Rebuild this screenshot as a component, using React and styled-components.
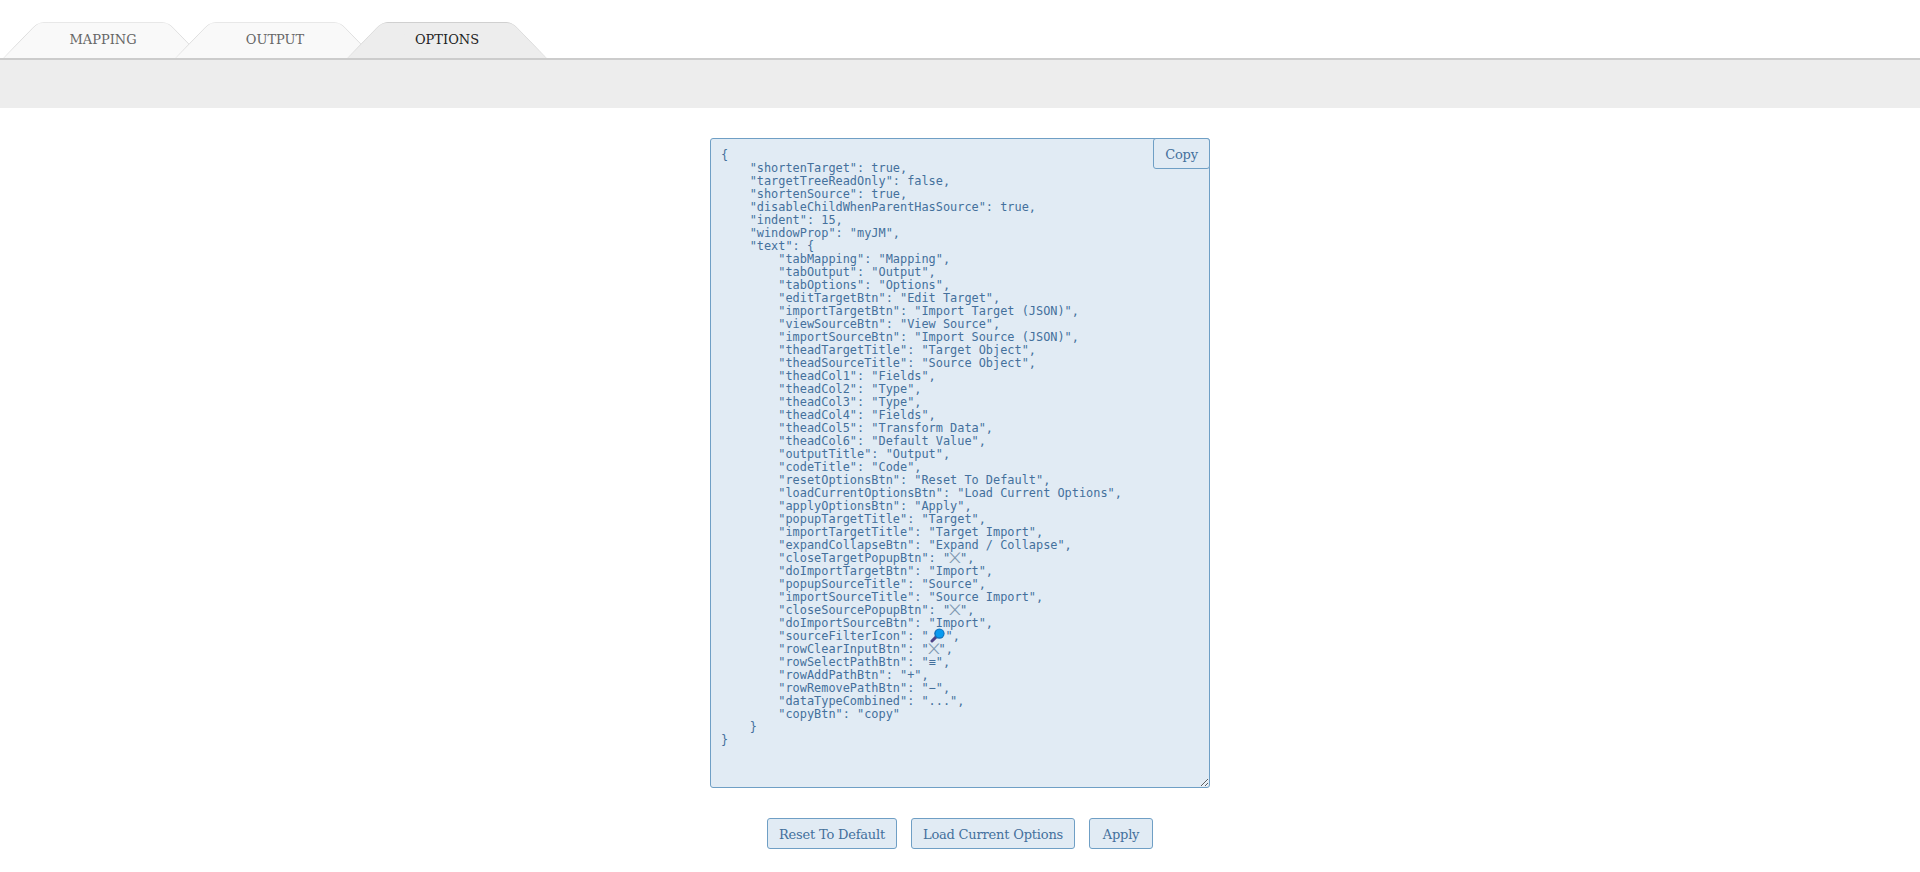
import React from 'react'
import styled, { createGlobalStyle } from 'styled-components'

const GlobalStyle = createGlobalStyle`
  html, body {
    margin: 0;
    padding: 0;
    background: #fff;
    font-family: 'DejaVu Serif', 'Liberation Serif', serif;
  }
`

const options = `{
    "shortenTarget": true,
    "targetTreeReadOnly": false,
    "shortenSource": true,
    "disableChildWhenParentHasSource": true,
    "indent": 15,
    "windowProp": "myJM",
    "text": {
        "tabMapping": "Mapping",
        "tabOutput": "Output",
        "tabOptions": "Options",
        "editTargetBtn": "Edit Target",
        "importTargetBtn": "Import Target (JSON)",
        "viewSourceBtn": "View Source",
        "importSourceBtn": "Import Source (JSON)",
        "theadTargetTitle": "Target Object",
        "theadSourceTitle": "Source Object",
        "theadCol1": "Fields",
        "theadCol2": "Type",
        "theadCol3": "Type",
        "theadCol4": "Fields",
        "theadCol5": "Transform Data",
        "theadCol6": "Default Value",
        "outputTitle": "Output",
        "codeTitle": "Code",
        "resetOptionsBtn": "Reset To Default",
        "loadCurrentOptionsBtn": "Load Current Options",
        "applyOptionsBtn": "Apply",
        "popupTargetTitle": "Target",
        "importTargetTitle": "Target Import",
        "expandCollapseBtn": "Expand / Collapse",
        "closeTargetPopupBtn": "╳",
        "doImportTargetBtn": "Import",
        "popupSourceTitle": "Source",
        "importSourceTitle": "Source Import",
        "closeSourcePopupBtn": "╳",
        "doImportSourceBtn": "Import",
        "sourceFilterIcon": "🔎",
        "rowClearInputBtn": "╳",
        "rowSelectPathBtn": "≡",
        "rowAddPathBtn": "+",
        "rowRemovePathBtn": "−",
        "dataTypeCombined": "...",
        "copyBtn": "copy"
    }
}`

const TabBar = styled.ul`
  display: flex;
  margin: 0;
  padding: 22px 0 0 3px;
  height: 36px;
  list-style: none;
  border-bottom: 2px solid #ccc;
`

const Tab = styled.li`
  position: relative;
  z-index: ${p => p.$index};
  width: 200px;
  height: 36px;
  margin-right: -28px;
  font-size: 13px;
  line-height: 36px;
  text-align: center;
  text-transform: uppercase;
  color: ${p => (p.$active ? '#222' : '#666')};

  &::before,
  &::after {
    content: '';
    position: absolute;
    z-index: -1;
    top: 0;
    bottom: 0;
    width: 60%;
    box-sizing: border-box;
    background: ${p => (p.$active ? '#ededed' : '#f9f9f9')};
    border-top: 1px solid ${p => (p.$active ? '#d0d0d0' : '#e8e8e8')};
  }

  &::before {
    left: 0;
    transform-origin: left bottom;
    transform: skewX(-44deg);
    border-left: 1px solid #d4d4d4;
    border-top-left-radius: 6px;
  }

  &::after {
    right: 0;
    transform-origin: right bottom;
    transform: skewX(44deg);
    border-right: 1px solid #d4d4d4;
    border-top-right-radius: 6px;
  }
`

const Strip = styled.div`
  height: 48px;
  background: #ededed;
`

const Main = styled.div`
  display: flex;
  flex-direction: column;
  align-items: center;
  padding-top: 30px;
`

const EditorWrap = styled.div`
  position: relative;
  width: 500px;
  height: 650px;
`

const Editor = styled.pre`
  box-sizing: border-box;
  width: 500px;
  height: 650px;
  margin: 0;
  padding: 10px 10px;
  overflow: auto;
  resize: both;
  border: 1px solid #6f9fc5;
  border-radius: 3px;
  background: #e1ebf4;
  color: #44709c;
  font-family: 'DejaVu Sans Mono', monospace;
  font-size: 11.9px;
  line-height: 13px;
`

const CrossGlyph = styled.span`
  display: inline-block;
  width: 10px;
  height: 13px;
  vertical-align: top;
  font-size: 9px;
  text-align: center;
  color: #7d97b0;
  transform: scale(1.8, 1);
`

const LensIcon = styled.svg`
  display: inline-block;
  width: 15px;
  height: 15px;
  margin: -2px 1px 0;
  vertical-align: top;
`

const Button = styled.button`
  box-sizing: border-box;
  width: ${p => p.$width}px;
  height: 31px;
  padding: 1px 0 0;
  border: 1px solid #6f9fc5;
  border-radius: 3px;
  background: #e1ebf4;
  color: #44709c;
  font-family: inherit;
  font-size: 13px;
  letter-spacing: -0.2px;
`

const CopyButton = styled(Button)`
  position: absolute;
  top: 0;
  right: 0;
`

const Actions = styled.div`
  display: flex;
  gap: 14px;
  margin-top: 30px;
`

// the textarea text has two glyphs no installed font draws the same way
function renderOptions(text) {
  return text.split(/(╳|🔎)/u).map((part, i) => {
    if (part === '╳') return <CrossGlyph key={i}>╳</CrossGlyph>
    if (part === '🔎') {
      return (
        <LensIcon key={i} viewBox="0 0 15 15" role="img" aria-label="🔎">
          <path d="M6.4 8.6 2 13" stroke="#4f4488" strokeWidth="3" strokeLinecap="round" />
          <circle cx="9.4" cy="5.6" r="5.2" fill="#1473bd" />
          <circle cx="9.6" cy="5.4" r="3.9" fill="#0a9bf0" />
        </LensIcon>
      )
    }
    return part
  })
}

export default function App() {
  return (
    <>
      <GlobalStyle />
      <TabBar>
        <Tab $index={1}>Mapping</Tab>
        <Tab $index={2}>Output</Tab>
        <Tab $index={3} $active>Options</Tab>
      </TabBar>
      <Strip />
      <Main>
        <EditorWrap>
          <Editor>{renderOptions(options)}</Editor>
          <CopyButton $width={57}>Copy</CopyButton>
        </EditorWrap>
        <Actions>
          <Button $width={130}>Reset To Default</Button>
          <Button $width={164}>Load Current Options</Button>
          <Button $width={64}>Apply</Button>
        </Actions>
      </Main>
    </>
  )
}
